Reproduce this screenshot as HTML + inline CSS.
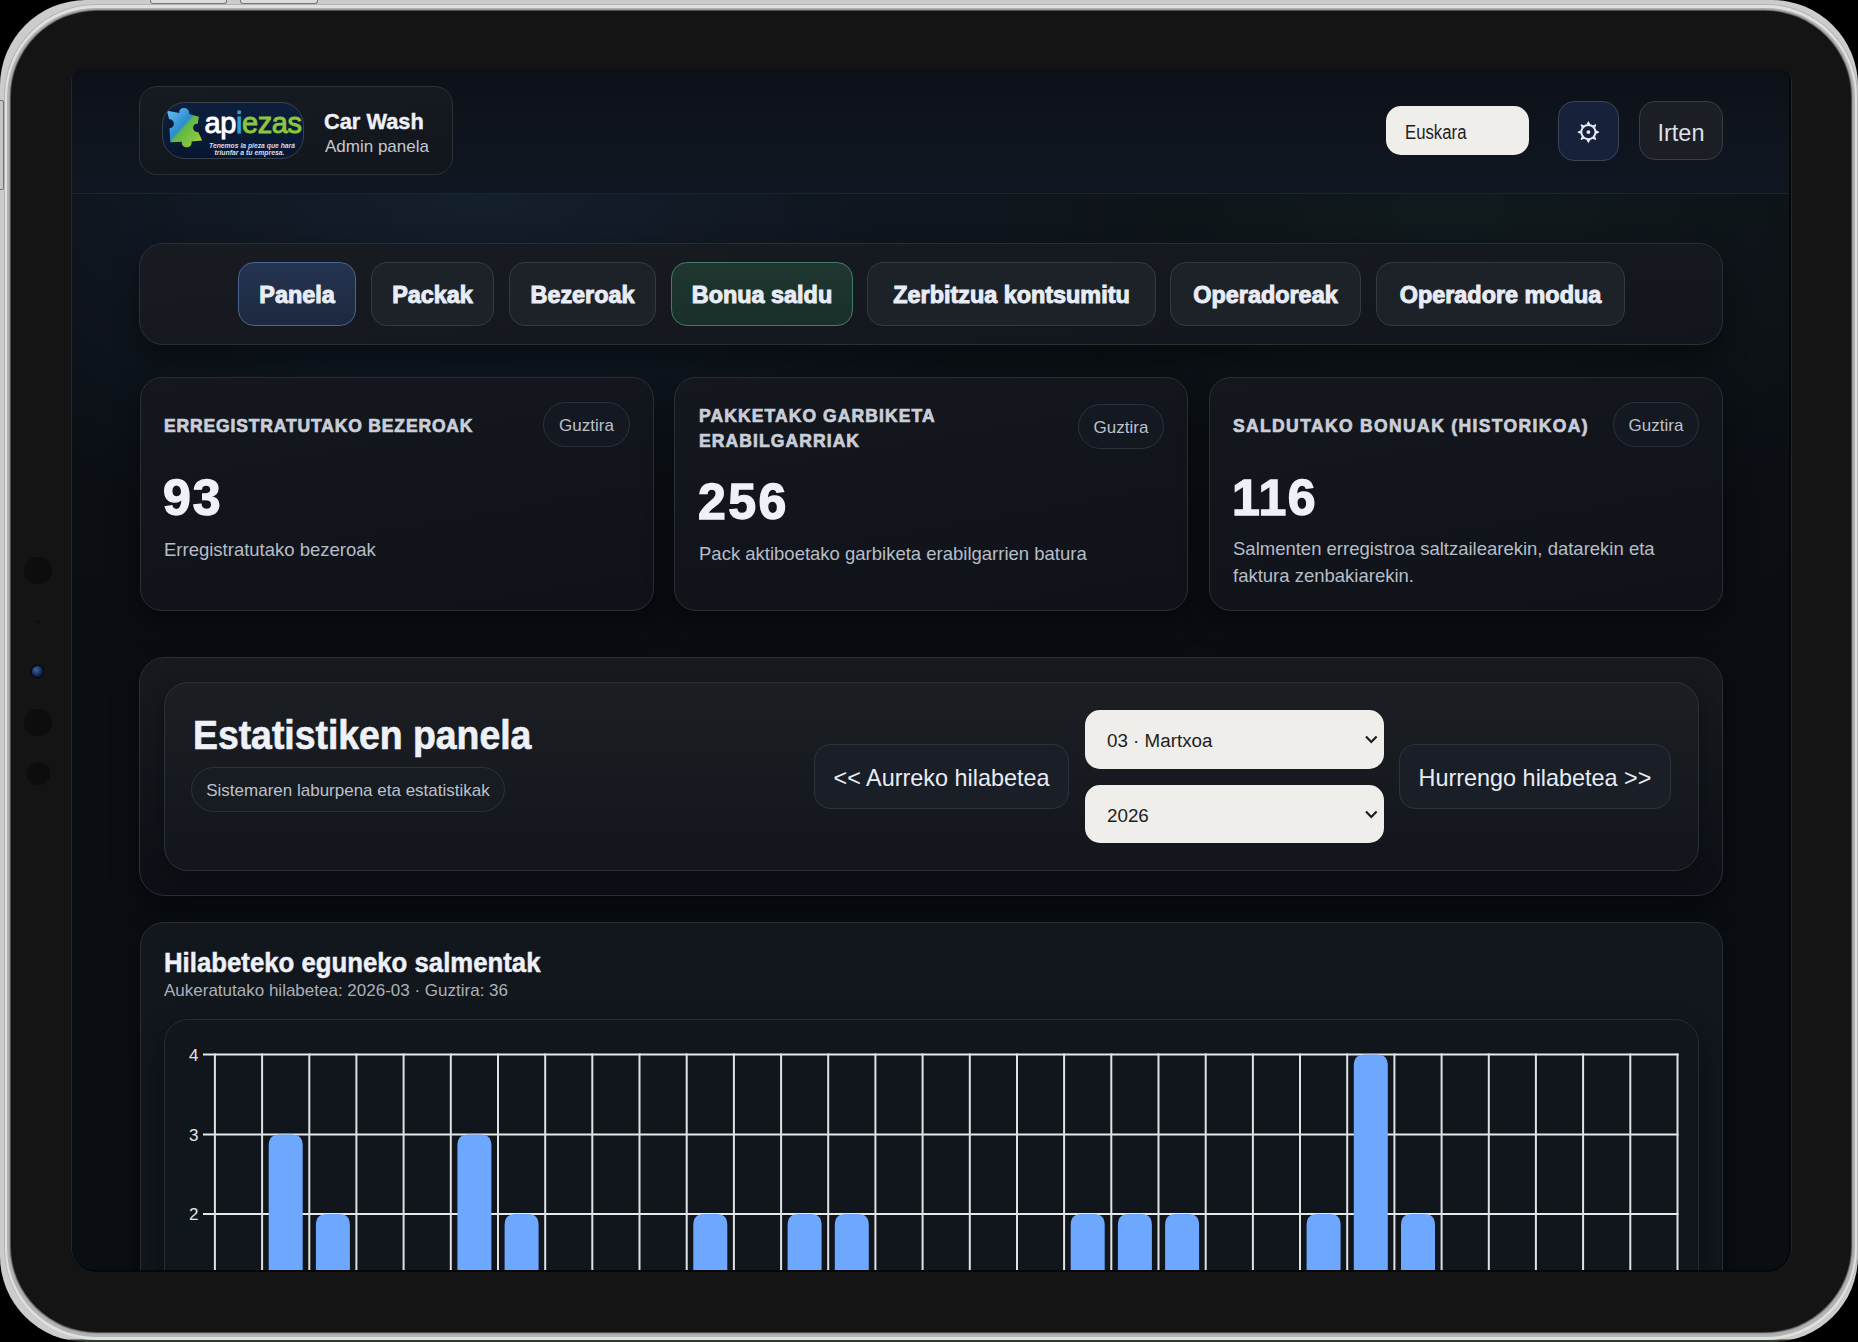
<!DOCTYPE html>
<html><head><meta charset="utf-8">
<style>
*{box-sizing:border-box;margin:0;padding:0}
html,body{width:1858px;height:1342px;overflow:hidden;background:#000;font-family:"Liberation Sans",sans-serif}
.abs{position:absolute}
#edge{left:0;top:0;width:1858px;height:1342px;background:linear-gradient(#cbcccb 0,#cbcccb 1339px,#2f3a2c 1340px);border-radius:86px}
#f0{left:4px;top:4px;width:1854px;height:1336px;border-radius:92px;background:#b4b4b4}
#f1{left:5px;top:5px;width:1852px;height:1334.5px;border-radius:91px;background:#dfe0df}
#f2{left:7px;top:7.5px;width:1848px;height:1329.5px;border-radius:89px;background:#b3b3b3}
#bezel{left:10.5px;top:10.5px;width:1840px;height:1321.5px;border-radius:86px;background:#141414;box-shadow:0 0 1.5px 1px #3a3a3a}
#scrf{left:71px;top:69px;width:1721px;height:1203px;border-radius:13px 13px 25px 25px;background:#25262a}
#scrb{left:71.5px;top:69px;width:1719px;height:1202.5px;border-radius:12px 12px 24px 24px;background:#050608}
#scr{left:0;top:0;width:1858px;height:1342px;clip-path:inset(69px 69px 72px 72px round 11px 11px 22px 22px);background:
 radial-gradient(ellipse 700px 360px at 480px 195px, rgba(45,75,115,0.26), rgba(45,75,115,0) 100%),
 radial-gradient(ellipse 600px 340px at 1450px 205px, rgba(45,90,80,0.15), rgba(45,90,80,0) 100%),
 linear-gradient(180deg,#0c1016 0px,#0a0d12 600px,#0a0d12 1342px)}
.dot{position:absolute;border-radius:50%;background:#0d0d0d}
.txt{position:absolute;white-space:nowrap;color:#e7ebf3}
.card{position:absolute;border:1px solid #2a2e35;background:linear-gradient(170deg,#14171e,#0f1319);border-radius:22px;box-shadow:0 12px 28px rgba(0,0,0,0.45)}
.btn{position:absolute;border:1px solid #343942;background:#1d2128;border-radius:16px;color:#e8ecf5;font-weight:700;font-size:23.4px;display:flex;align-items:center;justify-content:center;white-space:nowrap}
.hv{-webkit-text-stroke:1px #e8ecf5}
.pill{position:absolute;border:1px solid #2a323e;background:#141820;border-radius:23px;color:#bcc1ca;font-size:17px;padding-top:3px;display:flex;align-items:center;justify-content:center;white-space:nowrap}
.ttl{position:absolute;margin-top:1.5px;color:#c9ced8;font-weight:700;font-size:17.5px;letter-spacing:1.1px;line-height:25.2px;-webkit-text-stroke:0.7px #c9ced8}
.num{position:absolute;color:#eef1f7;font-weight:700;font-size:50px;line-height:50px;-webkit-text-stroke:1.4px #eef1f7}
.desc{position:absolute;color:#b7bdc7;font-size:18.5px;line-height:26.8px;margin-top:2px}
.sel{position:absolute;background:#f0eeea;border-radius:15px;color:#1d1d1f;font-size:18.8px}
</style></head><body>
<div id="edge" class="abs"></div>
<div class="abs" style="left:150px;top:0;width:77px;height:4px;background:#dcdcdc;border:1px solid #777;border-top:0;border-radius:0 0 3px 3px"></div>
<div class="abs" style="left:240px;top:0;width:78px;height:4px;background:#dcdcdc;border:1px solid #777;border-top:0;border-radius:0 0 3px 3px"></div>
<div class="abs" style="left:0;top:100px;width:4px;height:90px;background:#c4c6c4;border:1px solid #6d706d;border-left:0;border-radius:0 2px 2px 0"></div>
<div id="f0" class="abs"></div>
<div id="f1" class="abs"></div>
<div id="f2" class="abs"></div>
<div id="bezel" class="abs"></div>
<div class="dot" style="left:24px;top:556.5px;width:27.5px;height:27.5px"></div>
<div class="dot" style="left:36px;top:619.5px;width:4px;height:4px"></div>
<div class="dot" style="left:32px;top:666px;width:11px;height:11px;box-shadow:0 0 0 1.5px #0a0b0c;background:radial-gradient(circle at 38% 35%,#3c68a6 0,#1f4078 35%,#0b1a38 70%,#050a12 100%)"></div>
<div class="dot" style="left:24px;top:708.5px;width:27.5px;height:27.5px"></div>
<div class="dot" style="left:26.5px;top:762px;width:23px;height:23px"></div>
<div id="scrf" class="abs"></div>
<div id="scrb" class="abs"></div>
<div id="scr" class="abs">
  <!-- header -->
  <div class="abs" style="left:72px;top:69px;width:1719px;height:125px;background:linear-gradient(180deg,#0c1118,#111722);border-bottom:1.5px solid #1d232c"></div>
  <div class="card" style="left:139px;top:86px;width:314px;height:89px;border-radius:18px;background:linear-gradient(175deg,#161a21,#12161c);border-color:#2c3037;box-shadow:none"></div>
  <div class="abs" style="left:162px;top:102px;width:142px;height:57px;border-radius:23px;background:linear-gradient(#0d1f3d,#081630);border:1px solid #39414d;overflow:hidden">
  <svg class="abs" style="left:-1px;top:-1px" width="142" height="57" viewBox="162 102 142 57">
   <defs><linearGradient id="pz" x1="0" y1="0" x2="1" y2="1"><stop offset="0" stop-color="#6cc4f2"/><stop offset="0.44" stop-color="#2a8bd0"/><stop offset="0.5" stop-color="#5db846"/><stop offset="0.78" stop-color="#86c540"/><stop offset="1" stop-color="#c2da2e"/></linearGradient></defs>
   <path d="M167,110.7 L179.5,113 C178,106.5 190,106 189.2,114 L198.9,116.8 L197.8,123.8 C191.5,123 191.5,132.5 198.3,132.2 L202.2,140.5 L191.5,141.4 C193,149 181,149.5 181.8,141.8 L170.3,142.2 L169.5,128 C175.5,128.5 175.5,119 169,119 Z" fill="url(#pz)"/>
   <text x="204.5" y="132.5" font-family="Liberation Sans" font-size="29" font-weight="400" letter-spacing="-0.4"><tspan fill="#ffffff" stroke="#ffffff" stroke-width="0.9">ap</tspan><tspan fill="#27a6df" stroke="#27a6df" stroke-width="0.9">i</tspan><tspan fill="#8cc63f" stroke="#8cc63f" stroke-width="0.9">ezas</tspan></text>
   <text x="209" y="147.5" font-family="Liberation Sans" font-size="7.6" font-weight="700" font-style="italic" fill="#d9dde3" textLength="86" lengthAdjust="spacingAndGlyphs">Tenemos la pieza que hará</text>
   <text x="214.5" y="154.5" font-family="Liberation Sans" font-size="7.6" font-weight="700" font-style="italic" fill="#d9dde3" textLength="70" lengthAdjust="spacingAndGlyphs">triunfar a tu empresa.</text>
  </svg>
 </div>
  <div class="txt" style="left:324px;top:109px;font-size:21.8px;font-weight:700;color:#eef1f8;-webkit-text-stroke:0.4px #eef1f8">Car Wash</div>
  <div class="txt" style="left:325px;top:136.5px;font-size:17px;color:#c3c8d0">Admin panela</div>
  <div class="sel" style="left:1386px;top:106px;width:143px;height:49px;border-radius:15px"><span class="txt" style="left:19px;top:14.5px;color:#1d1d1f;font-size:19.6px;transform:scaleX(0.855);transform-origin:left top">Euskara</span></div>
  <div class="btn" style="left:1558px;top:101px;width:61px;height:60px;background:#18213a;border-color:#3b4454"></div>
  <svg class="abs" style="left:1568px;top:112px" width="40" height="40" viewBox="1568 112 40 40">
   <g fill="#e6ecfa"><circle cx="1588.4" cy="132.1" r="1.9"/>
   <circle cx="1588.4" cy="132.1" r="7.1" fill="none" stroke="#e6ecfa" stroke-width="1.9"/>
   <g transform="translate(1588.4 132.1)">
    <path id="tooth" d="M-1.9,-7.6 L-0.4,-10.7 L0.4,-10.7 L1.9,-7.6 Z"/>
    <use href="#tooth" transform="rotate(45)"/><use href="#tooth" transform="rotate(90)"/><use href="#tooth" transform="rotate(135)"/><use href="#tooth" transform="rotate(180)"/><use href="#tooth" transform="rotate(225)"/><use href="#tooth" transform="rotate(270)"/><use href="#tooth" transform="rotate(315)"/>
   </g></g>
  </svg>
  <div class="btn" style="left:1639px;top:101px;width:84px;height:59px;background:#1b1e24;border-color:#3a3d42;font-weight:400;font-size:23.5px;padding-top:6px;color:#dde1e8">Irten</div>

  <!-- nav -->
  <div class="card" style="left:139px;top:243px;width:1584px;height:102px;border-radius:24px;background:linear-gradient(175deg,#181b22,#12151b);border-color:#2a2e36"></div>
  <div class="btn hv" style="left:238px;top:262px;width:118px;height:64px;background:linear-gradient(#243350,#1d2940);border-color:#4a6590;border-width:1.5px;padding-top:3px">Panela</div>
  <div class="btn hv" style="left:371px;top:262px;width:123px;height:64px;padding-top:3px">Packak</div>
  <div class="btn hv" style="left:509px;top:262px;width:147px;height:64px;padding-top:3px">Bezeroak</div>
  <div class="btn hv" style="left:671px;top:262px;width:182px;height:64px;background:linear-gradient(#1f3631,#1a2f29);border-color:#3f7d64;border-width:1.5px;padding-top:3px">Bonua saldu</div>
  <div class="btn hv" style="left:867px;top:262px;width:289px;height:64px;padding-top:3px">Zerbitzua kontsumitu</div>
  <div class="btn hv" style="left:1170px;top:262px;width:191px;height:64px;padding-top:3px">Operadoreak</div>
  <div class="btn hv" style="left:1376px;top:262px;width:249px;height:64px;padding-top:3px">Operadore modua</div>

  <!-- stat cards -->
  <div class="card" style="left:140px;top:377px;width:514px;height:234px"></div>
  <div class="ttl" style="left:164px;top:412px;letter-spacing:0.85px">ERREGISTRATUTAKO BEZEROAK</div>
  <div class="pill" style="left:543px;top:402px;width:87px;height:45px">Guztira</div>
  <div class="num" style="left:163px;top:473px;letter-spacing:2px">93</div>
  <div class="desc" style="left:164px;top:535px">Erregistratutako bezeroak</div>

  <div class="card" style="left:674px;top:377px;width:514px;height:234px"></div>
  <div class="ttl" style="left:699px;top:402px">PAKKETAKO GARBIKETA<br>ERABILGARRIAK</div>
  <div class="pill" style="left:1078px;top:404px;width:86px;height:45px">Guztira</div>
  <div class="num" style="left:698px;top:477px;letter-spacing:2.5px">256</div>
  <div class="desc" style="left:699px;top:539px">Pack aktiboetako garbiketa erabilgarrien batura</div>

  <div class="card" style="left:1209px;top:377px;width:514px;height:234px"></div>
  <div class="ttl" style="left:1233px;top:412px;letter-spacing:1.37px">SALDUTAKO BONUAK (HISTORIKOA)</div>
  <div class="pill" style="left:1613px;top:402px;width:86px;height:45px">Guztira</div>
  <div class="num" style="left:1232px;top:473px;letter-spacing:1.5px">116</div>
  <div class="desc" style="left:1233px;top:534px">Salmenten erregistroa saltzailearekin, datarekin eta<br>faktura zenbakiarekin.</div>

  <!-- stats panel -->
  <div class="card" style="left:139px;top:657px;width:1584px;height:239px;border-radius:26px;background:linear-gradient(180deg,#17191e,#0c1016)"></div>
  <div class="card" style="left:164px;top:682px;width:1535px;height:189px;border-radius:24px;background:linear-gradient(180deg,#1b1e23,#12151b);border-color:#2b3038;box-shadow:0 8px 18px rgba(0,0,0,0.35)"></div>
  <div class="txt" style="left:193px;top:711px;font-size:41.5px;font-weight:700;color:#eef1f8;-webkit-text-stroke:0.7px #eef1f8;transform:scaleX(0.9);transform-origin:left top">Estatistiken panela</div>
  <div class="pill" style="left:191px;top:767px;width:314px;height:45px;background:#171b22">Sistemaren laburpena eta estatistikak</div>
  <div class="btn" style="left:814px;top:744px;width:255px;height:65px;font-weight:400;background:#1a1e26;border-color:#2c323b;padding-top:3.5px">&lt;&lt; Aurreko hilabetea</div>
  <div class="sel" style="left:1085px;top:710px;width:299px;height:59px"><span class="txt" style="left:22px;top:20px;color:#1d1d1f">03 · Martxoa</span><svg class="abs" style="left:279px;top:24px" width="14" height="10"><path d="M2,2.5 L7.3,8 L12.6,2.5" fill="none" stroke="#1b1b1b" stroke-width="2.1"/></svg></div>
  <div class="sel" style="left:1085px;top:785px;width:299px;height:58px"><span class="txt" style="left:22px;top:19.5px;color:#1d1d1f">2026</span><svg class="abs" style="left:279px;top:24px" width="14" height="10"><path d="M2,2.5 L7.3,8 L12.6,2.5" fill="none" stroke="#1b1b1b" stroke-width="2.1"/></svg></div>
  <div class="btn" style="left:1399px;top:744px;width:272px;height:65px;font-weight:400;background:#1a1e26;border-color:#2c323b;padding-top:3.5px">Hurrengo hilabetea &gt;&gt;</div>

  <!-- chart card -->
  <div class="card" style="left:140px;top:922px;width:1583px;height:500px;border-radius:24px;background:#12161d"></div>
  <div class="txt" style="left:164px;top:947px;font-size:28px;font-weight:700;color:#eef1f8;-webkit-text-stroke:0.5px #eef1f8;transform:scaleX(0.92);transform-origin:left top">Hilabeteko eguneko salmentak</div>
  <div class="txt" style="left:164px;top:981px;font-size:17px;color:#aab0ba">Aukeratutako hilabetea: 2026-03 · Guztira: 36</div>
  <div class="card" style="left:164px;top:1019px;width:1535px;height:400px;border-radius:24px;background:#11151c;border-color:#262c35"></div>
  <svg class="abs" style="left:0;top:0" width="1858" height="1342" id="chart">
<line x1="203" y1="1054.5" x2="1678.5" y2="1054.5" stroke="#e9e9e9" stroke-width="2"/>
<line x1="203" y1="1134.5" x2="1678.5" y2="1134.5" stroke="#e9e9e9" stroke-width="2"/>
<line x1="203" y1="1214.0" x2="1678.5" y2="1214.0" stroke="#e9e9e9" stroke-width="2"/>
<line x1="203" y1="1293.5" x2="1678.5" y2="1293.5" stroke="#e9e9e9" stroke-width="2"/>
<line x1="214.9" y1="1053.5" x2="214.9" y2="1400" stroke="#e2e2e2" stroke-width="2"/>
<line x1="262.1" y1="1053.5" x2="262.1" y2="1400" stroke="#e2e2e2" stroke-width="2"/>
<line x1="309.3" y1="1053.5" x2="309.3" y2="1400" stroke="#e2e2e2" stroke-width="2"/>
<line x1="356.4" y1="1053.5" x2="356.4" y2="1400" stroke="#e2e2e2" stroke-width="2"/>
<line x1="403.6" y1="1053.5" x2="403.6" y2="1400" stroke="#e2e2e2" stroke-width="2"/>
<line x1="450.8" y1="1053.5" x2="450.8" y2="1400" stroke="#e2e2e2" stroke-width="2"/>
<line x1="498.0" y1="1053.5" x2="498.0" y2="1400" stroke="#e2e2e2" stroke-width="2"/>
<line x1="545.2" y1="1053.5" x2="545.2" y2="1400" stroke="#e2e2e2" stroke-width="2"/>
<line x1="592.3" y1="1053.5" x2="592.3" y2="1400" stroke="#e2e2e2" stroke-width="2"/>
<line x1="639.5" y1="1053.5" x2="639.5" y2="1400" stroke="#e2e2e2" stroke-width="2"/>
<line x1="686.7" y1="1053.5" x2="686.7" y2="1400" stroke="#e2e2e2" stroke-width="2"/>
<line x1="733.9" y1="1053.5" x2="733.9" y2="1400" stroke="#e2e2e2" stroke-width="2"/>
<line x1="781.1" y1="1053.5" x2="781.1" y2="1400" stroke="#e2e2e2" stroke-width="2"/>
<line x1="828.2" y1="1053.5" x2="828.2" y2="1400" stroke="#e2e2e2" stroke-width="2"/>
<line x1="875.4" y1="1053.5" x2="875.4" y2="1400" stroke="#e2e2e2" stroke-width="2"/>
<line x1="922.6" y1="1053.5" x2="922.6" y2="1400" stroke="#e2e2e2" stroke-width="2"/>
<line x1="969.8" y1="1053.5" x2="969.8" y2="1400" stroke="#e2e2e2" stroke-width="2"/>
<line x1="1017.0" y1="1053.5" x2="1017.0" y2="1400" stroke="#e2e2e2" stroke-width="2"/>
<line x1="1064.1" y1="1053.5" x2="1064.1" y2="1400" stroke="#e2e2e2" stroke-width="2"/>
<line x1="1111.3" y1="1053.5" x2="1111.3" y2="1400" stroke="#e2e2e2" stroke-width="2"/>
<line x1="1158.5" y1="1053.5" x2="1158.5" y2="1400" stroke="#e2e2e2" stroke-width="2"/>
<line x1="1205.7" y1="1053.5" x2="1205.7" y2="1400" stroke="#e2e2e2" stroke-width="2"/>
<line x1="1252.9" y1="1053.5" x2="1252.9" y2="1400" stroke="#e2e2e2" stroke-width="2"/>
<line x1="1300.0" y1="1053.5" x2="1300.0" y2="1400" stroke="#e2e2e2" stroke-width="2"/>
<line x1="1347.2" y1="1053.5" x2="1347.2" y2="1400" stroke="#e2e2e2" stroke-width="2"/>
<line x1="1394.4" y1="1053.5" x2="1394.4" y2="1400" stroke="#e2e2e2" stroke-width="2"/>
<line x1="1441.6" y1="1053.5" x2="1441.6" y2="1400" stroke="#e2e2e2" stroke-width="2"/>
<line x1="1488.8" y1="1053.5" x2="1488.8" y2="1400" stroke="#e2e2e2" stroke-width="2"/>
<line x1="1535.9" y1="1053.5" x2="1535.9" y2="1400" stroke="#e2e2e2" stroke-width="2"/>
<line x1="1583.1" y1="1053.5" x2="1583.1" y2="1400" stroke="#e2e2e2" stroke-width="2"/>
<line x1="1630.3" y1="1053.5" x2="1630.3" y2="1400" stroke="#e2e2e2" stroke-width="2"/>
<line x1="1677.5" y1="1053.5" x2="1677.5" y2="1400" stroke="#e2e2e2" stroke-width="2"/>
<text x="198.5" y="1060.5" fill="#e6e6e6" font-size="17" text-anchor="end" font-family="Liberation Sans">4</text>
<text x="198.5" y="1140.5" fill="#e6e6e6" font-size="17" text-anchor="end" font-family="Liberation Sans">3</text>
<text x="198.5" y="1220.0" fill="#e6e6e6" font-size="17" text-anchor="end" font-family="Liberation Sans">2</text>
<path d="M268.7,1400 V1145.5 Q268.7,1134.5 279.7,1134.5 H291.7 Q302.7,1134.5 302.7,1145.5 V1400 Z" fill="#6ea8fe"/>
<path d="M315.9,1400 V1225.0 Q315.9,1214.0 326.9,1214.0 H338.9 Q349.9,1214.0 349.9,1225.0 V1400 Z" fill="#6ea8fe"/>
<path d="M457.4,1400 V1145.5 Q457.4,1134.5 468.4,1134.5 H480.4 Q491.4,1134.5 491.4,1145.5 V1400 Z" fill="#6ea8fe"/>
<path d="M504.6,1400 V1225.0 Q504.6,1214.0 515.6,1214.0 H527.6 Q538.6,1214.0 538.6,1225.0 V1400 Z" fill="#6ea8fe"/>
<path d="M693.3,1400 V1225.0 Q693.3,1214.0 704.3,1214.0 H716.3 Q727.3,1214.0 727.3,1225.0 V1400 Z" fill="#6ea8fe"/>
<path d="M787.6,1400 V1225.0 Q787.6,1214.0 798.6,1214.0 H810.6 Q821.6,1214.0 821.6,1225.0 V1400 Z" fill="#6ea8fe"/>
<path d="M834.8,1400 V1225.0 Q834.8,1214.0 845.8,1214.0 H857.8 Q868.8,1214.0 868.8,1225.0 V1400 Z" fill="#6ea8fe"/>
<path d="M1070.7,1400 V1225.0 Q1070.7,1214.0 1081.7,1214.0 H1093.7 Q1104.7,1214.0 1104.7,1225.0 V1400 Z" fill="#6ea8fe"/>
<path d="M1117.9,1400 V1225.0 Q1117.9,1214.0 1128.9,1214.0 H1140.9 Q1151.9,1214.0 1151.9,1225.0 V1400 Z" fill="#6ea8fe"/>
<path d="M1165.1,1400 V1225.0 Q1165.1,1214.0 1176.1,1214.0 H1188.1 Q1199.1,1214.0 1199.1,1225.0 V1400 Z" fill="#6ea8fe"/>
<path d="M1306.6,1400 V1225.0 Q1306.6,1214.0 1317.6,1214.0 H1329.6 Q1340.6,1214.0 1340.6,1225.0 V1400 Z" fill="#6ea8fe"/>
<path d="M1353.8,1400 V1065.5 Q1353.8,1054.5 1364.8,1054.5 H1376.8 Q1387.8,1054.5 1387.8,1065.5 V1400 Z" fill="#6ea8fe"/>
<path d="M1401.0,1400 V1225.0 Q1401.0,1214.0 1412.0,1214.0 H1424.0 Q1435.0,1214.0 1435.0,1225.0 V1400 Z" fill="#6ea8fe"/>
</svg>
</div>
</body></html>
